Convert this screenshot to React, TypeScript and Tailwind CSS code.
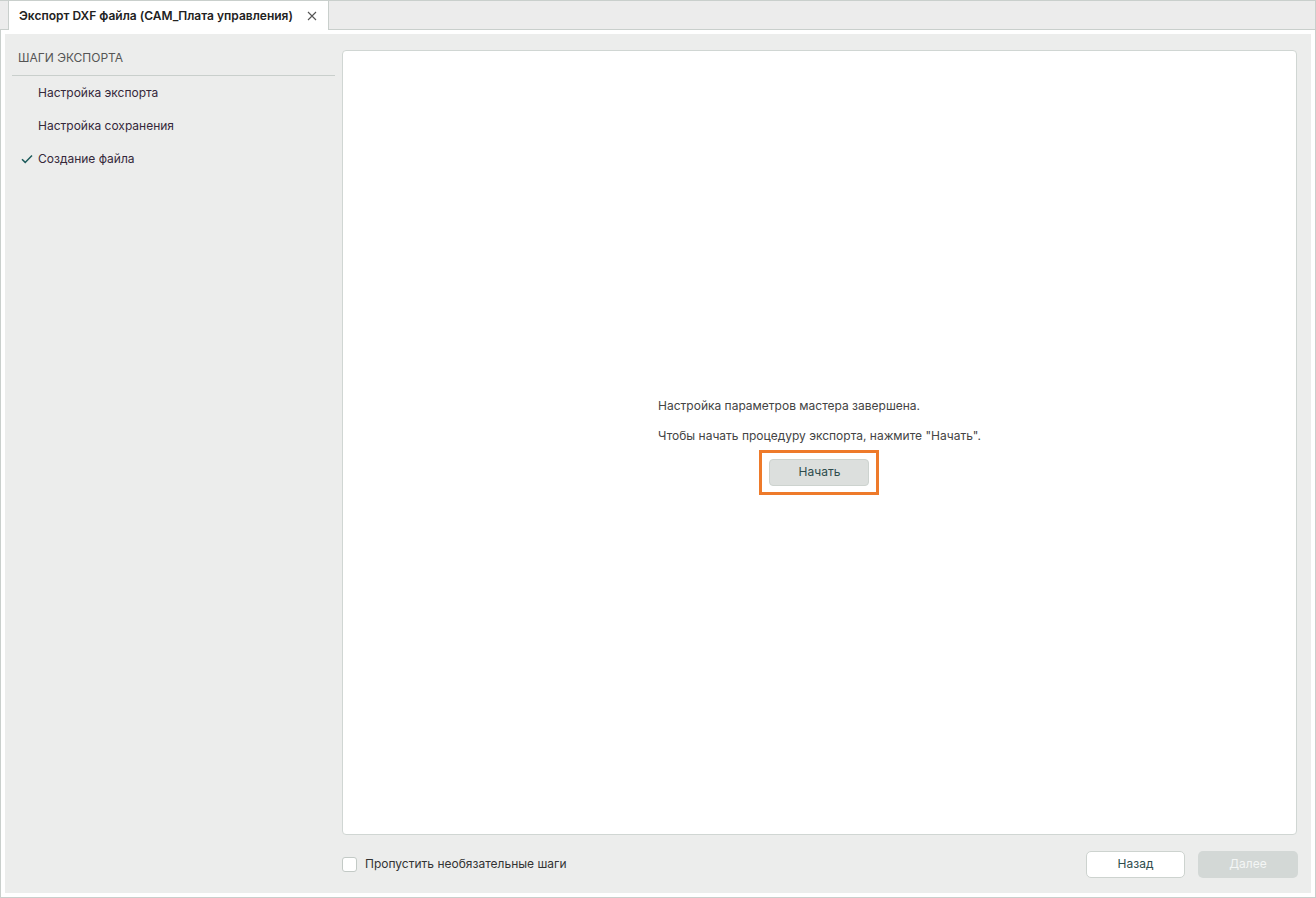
import * as React from "react";

// Шаги мастера экспорта
const steps = [
  { id: 1, name: "Настройка экспорта", done: false },
  { id: 2, name: "Настройка сохранения", done: false },
  { id: 3, name: "Создание файла", done: true },
];

function CheckIcon() {
  return (
    <svg width="12" height="10" viewBox="0 0 12 10" fill="none">
      <path d="M1 5.2L4.2 8.4L11 1.4" stroke="#1d5b5b" strokeWidth="1.5" />
    </svg>
  );
}

function CloseIcon() {
  return (
    <svg width="10" height="10" viewBox="0 0 10 10" fill="none">
      <path d="M1 1L9 9M9 1L1 9" stroke="#555" strokeWidth="1.1" />
    </svg>
  );
}

export default function App() {
  return (
    <div
      className="w-[1316px] h-[898px] flex flex-col bg-white text-[12px] text-[#333]"
      style={{ fontFamily: "Inter, 'Noto Sans', sans-serif" }}
    >
      {/* Вкладки */}
      <div className="h-[30px] shrink-0 flex items-end bg-[#ececec] border-t border-r border-b border-[#c9cfcc] pl-[8px]">
        <div className="h-[29px] -mb-px flex items-center bg-white border-l border-r border-[#c9cfcc] pl-[10px] pr-[11px] gap-[14px]">
          <span className="font-semibold text-[12px] text-[#222]">
            Экспорт DXF файла (CAM_Плата управления)
          </span>
          <CloseIcon />
        </div>
      </div>

      {/* Содержимое */}
      <div className="flex-1 flex border-l border-r border-b border-[#c9cfcc] p-[4px]">
        <div className="flex-1 flex bg-[#ecedec] pr-[14px]">
          {/* Шаги */}
          <div className="w-[330px] shrink-0 pl-[7px] pt-[16px]">
            <div className="pl-[6px] h-[25px] leading-[16px] text-[12px] text-[#555] uppercase">
              Шаги экспорта
            </div>
            <div className="h-px bg-[#c9cfcc]" />
            {steps.map((s) => (
              <div key={s.id} className="h-[33px] flex items-center">
                <div className="w-[26px] flex justify-center pl-[3px]">
                  {s.done && <CheckIcon />}
                </div>
                <span className="text-[#35283a]">{s.name}</span>
              </div>
            ))}
          </div>

          {/* Правая часть */}
          <div className="flex-1 flex flex-col ml-[7px] pt-[16px]">
            <div className="flex-1 bg-white border border-[#d0d6d3] rounded-[4px] flex items-center justify-center">
              <div className="flex flex-col pt-[7px]">
                <p className="text-[#444] leading-[16px]">Настройка параметров мастера завершена.</p>
                <p className="text-[#444] leading-[16px] mt-[14px]">
                  Чтобы начать процедуру экспорта, нажмите "Начать".
                </p>
                <div className="flex justify-center mt-[6px]">
                  <div className="border-[3px] border-[#ee7a2a] px-[7px] py-[6px]">
                    <button className="w-[100px] h-[27px] rounded-[4px] bg-[#dcdfdd] border border-[#cdd3cf] text-[#2e4c4c]">
                      Начать
                    </button>
                  </div>
                </div>
              </div>
            </div>

            {/* Нижняя панель */}
            <div className="h-[58px] shrink-0 flex items-center">
              <label className="flex items-center gap-[8px]">
                <span className="w-[15px] h-[15px] rounded-[3px] border border-[#c3cac6] bg-white" />
                <span className="text-[#333]">Пропустить необязательные шаги</span>
              </label>
              <div className="flex-1" />
              <button className="w-[99px] h-[27px] rounded-[5px] bg-white border border-[#cdd3cf] text-[#2e4c4c]">
                Назад
              </button>
              <button className="w-[100px] h-[27px] rounded-[5px] bg-[#d3d8d6] text-[#f4f6f5] ml-[13px] -mr-[1px]">
                Далее
              </button>
            </div>
          </div>
        </div>
      </div>
    </div>
  );
}
